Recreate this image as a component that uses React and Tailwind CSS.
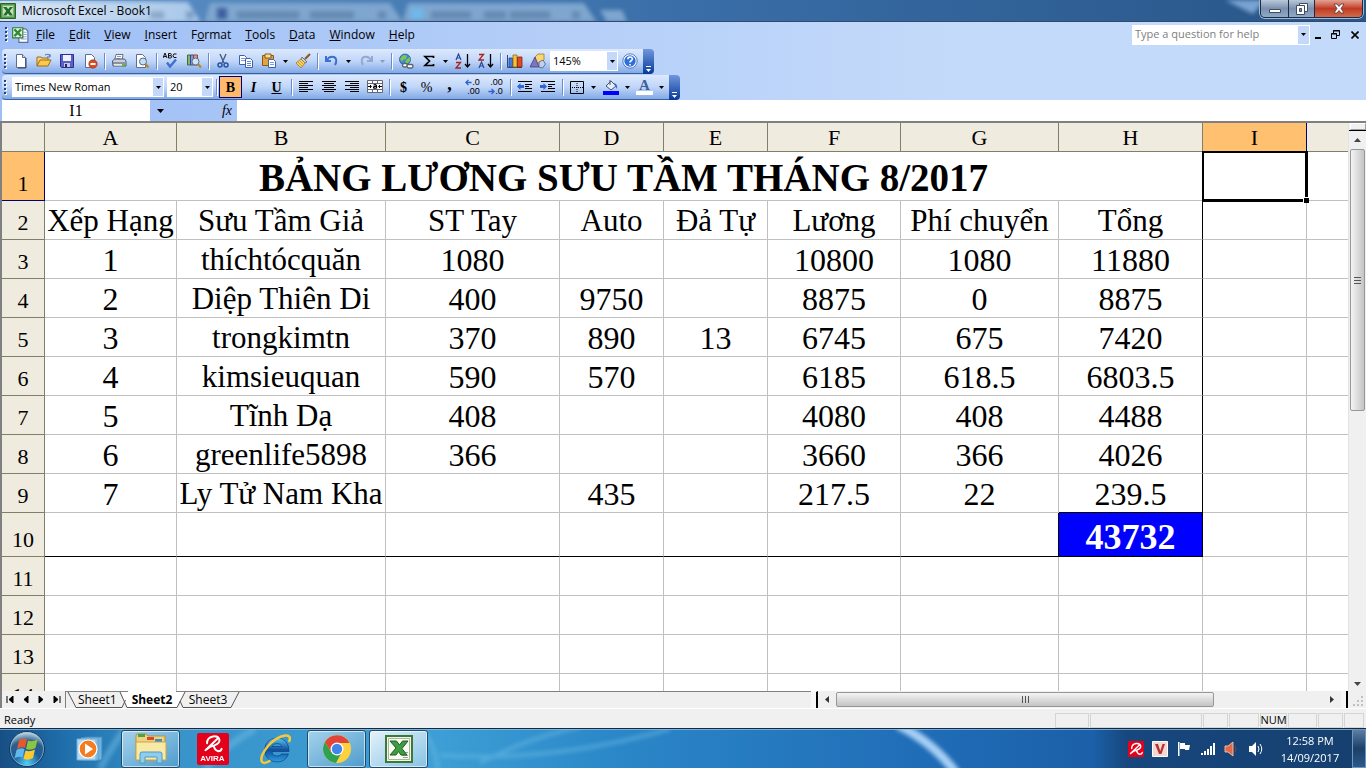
import clsx from 'clsx'

const UI = "font-['Open_Sans','Noto_Sans',sans-serif]"
const SERIF = "font-['Liberation_Serif',serif]"

const MENUS = ['File', 'Edit', 'View', 'Insert', 'Format', 'Tools', 'Data', 'Window', 'Help']
const ACCESS_KEY = { Format: 1 }

const COLUMNS = [
  { name: 'A', width: 'w-[132px]' },
  { name: 'B', width: 'w-[209px]' },
  { name: 'C', width: 'w-[174px]' },
  { name: 'D', width: 'w-[104px]' },
  { name: 'E', width: 'w-[104px]' },
  { name: 'F', width: 'w-[133px]' },
  { name: 'G', width: 'w-[158px]' },
  { name: 'H', width: 'w-[144px]' },
  { name: 'I', width: 'w-[104px]' },
  { name: '', width: '' },
]

const ROWS = [
  ['Xếp Hạng', 'Sưu Tầm Giả', 'ST Tay', 'Auto', 'Đả Tự', 'Lương', 'Phí chuyển', 'Tổng'],
  ['1', 'thíchtócquăn', '1080', '', '', '10800', '1080', '11880'],
  ['2', 'Diệp Thiên Di', '400', '9750', '', '8875', '0', '8875'],
  ['3', 'trongkimtn', '370', '890', '13', '6745', '675', '7420'],
  ['4', 'kimsieuquan', '590', '570', '', '6185', '618.5', '6803.5'],
  ['5', 'Tĩnh Dạ', '408', '', '', '4080', '408', '4488'],
  ['6', 'greenlife5898', '366', '', '', '3660', '366', '4026'],
  ['7', 'Ly Tử Nam Kha', '', '435', '', '217.5', '22', '239.5'],
  ['', '', '', '', '', '', '', '43732'],
  [], [], [], [],
]

function Svg({ size = 16, children, className }) {
  return (
    <svg width={size} height={size} viewBox="0 0 16 16" className={clsx('shrink-0', className)} aria-hidden="true">
      {children}
    </svg>
  )
}

function Caret({ className }) {
  return (
    <svg width="5" height="3" viewBox="0 0 5 3" className={clsx('shrink-0', className)} aria-hidden="true">
      <path d="M0 0h5L2.5 3z" fill="currentColor" />
    </svg>
  )
}

/* ---------- toolbar icons ---------- */

const page = <path d="M3.5 1.5h6l3 3v10h-9z" fill="#fff" stroke="#5b6f96" />

const lines = (rows) => rows.map(([x, y, w]) => <path key={y} d={`M${x} ${y}.5h${w}`} stroke="#000" />)

const ICONS = {
  new: <>{page}<path d="M9.5 1.5v3h3" fill="#cfdcf5" stroke="#5b6f96" /><path d="M13 5v10H5" fill="none" stroke="#33456c" /></>,
  open: (
    <>
      <path d="M1 13V4h4l1 1h6v2" fill="#f5d27a" stroke="#a06c14" />
      <path d="M1 13l3-6h11l-3 6z" fill="#fbc94e" stroke="#a06c14" />
      <path d="M9 2c2-1 4-1 5 1m0-2v3h-3" fill="none" stroke="#4a6fa0" />
    </>
  ),
  save: (
    <>
      <path d="M1.5 1.5h13v13h-12l-1-1z" fill="#5a5fc4" stroke="#2c2f8f" />
      <path d="M4 2h8v6H4z" fill="#eef1fb" />
      <path d="M5 10h6v4H5z" fill="#c3c6e6" />
      <path d="M6 11h2v3H6z" fill="#23266f" />
    </>
  ),
  permission: (
    <>
      {page}
      <circle cx="11" cy="11" r="4.2" fill="#e0491f" stroke="#a02b0c" strokeWidth=".6" />
      <path d="M8.5 10h5v2h-5z" fill="#fff" />
    </>
  ),
  print: (
    <>
      <path d="M5 1.5h7l-1 6H3.5z" fill="#fff" stroke="#65708c" />
      <path d="M6 3.5h4M5.5 5.5h4" stroke="#8d99b5" />
      <path d="M1.5 8l2-2h10l1.5 2v5h-13z" fill="#c9ced8" stroke="#4d586f" />
      <path d="M2 10h12" stroke="#4d586f" />
      <path d="M3 12h8" stroke="#fff" />
      <path d="M11 11h3v2h-3z" fill="#5cc02c" />
    </>
  ),
  preview: (
    <>
      <path d="M2.5 1.5h6l3 3v10h-9z" fill="#fff" stroke="#5b6f96" />
      <circle cx="9" cy="8.5" r="3.5" fill="#bfe0f5" stroke="#5f6b80" />
      <path d="M11.5 11l3 3.5" stroke="#b5852e" strokeWidth="2" />
    </>
  ),
  spelling: (
    <>
      <path d="M0 5l2-5 2 5M1 3.5h2M5.5 .5v4.5H7.5q1.200-.2 1.200-1.200T7.500 2.700H5.500M5.500 .5H7.300q1 0 1 1.100t-1 1.100M13.500 1q-3.500-1-3.500 1.700t3.500 1.800" fill="none" stroke="#111" />
      <path d="M4 9.5l3 4 6-7" fill="none" stroke="#3f6fd0" strokeWidth="2.4" />
    </>
  ),
  research: (
    <>
      <path d="M1.5 2h3v10h-3z" fill="#7db86c" stroke="#3c7332" />
      <path d="M4.5 2h3v10h-3z" fill="#8a96e0" stroke="#3b4596" />
      <path d="M7.5 2h4v10h-4z" fill="#d99a93" stroke="#8b4640" />
      <circle cx="9.5" cy="8.5" r="3.5" fill="#cfe6f6" stroke="#5f6b80" />
      <path d="M12 11l3 3.5" stroke="#b5852e" strokeWidth="2" />
    </>
  ),
  cut: (
    <>
      <path d="M5 1l4 9M11 1L7 10" stroke="#4b5d85" strokeWidth="1.4" />
      <circle cx="5" cy="12" r="2" fill="none" stroke="#2752a8" strokeWidth="1.5" />
      <circle cx="11" cy="12" r="2" fill="none" stroke="#2752a8" strokeWidth="1.5" />
    </>
  ),
  copy: (
    <>
      <path d="M1.5 2.5h5l2 2v7h-7z" fill="#fff" stroke="#3c62ad" />
      <path d="M3 5.5h4M3 7.5h4" stroke="#7b9bdb" />
      <path d="M7.5 5.5h5l2 2v7h-7z" fill="#fff" stroke="#3c62ad" />
      <path d="M9 8.5h4M9 10.5h4M9 12.5h4" stroke="#5f87d6" />
    </>
  ),
  paste: (
    <>
      <path d="M1.5 2.5h11v10h-11z" fill="#e0a53c" stroke="#8b5a12" />
      <path d="M4 1h6v4H4z" fill="#f4df9a" stroke="#8b5a12" />
      <path d="M7.5 6.5h5l2 2v6h-7z" fill="#fff" stroke="#3c62ad" />
      <path d="M9 9.5h4M9 11.5h4" stroke="#7b9bdb" />
    </>
  ),
  painter: (
    <>
      <path d="M15 1l-5 5" stroke="#8a5a1c" strokeWidth="2.2" />
      <path d="M7 4l5 5-2 1-4-4z" fill="#c9ced8" stroke="#555f78" strokeWidth=".8" />
      <path d="M6 6l4 4-4 5-5-5z" fill="#f6d264" stroke="#a7771d" strokeWidth=".8" />
      <path d="M3 9l4 4M4.5 7.5l4 4" stroke="#c28f29" strokeWidth=".8" />
    </>
  ),
  undo: <path d="M2 3v5h5M2.5 7.5q3-5 7.5-3.5 4 2 1 8" fill="none" stroke="#3b6fd0" strokeWidth="2" />,
  redo: <path d="M14 3v5H9M13.5 7.5Q10.5 2.5 6 4q-4 2-1 8" fill="none" stroke="#93a9cf" strokeWidth="2" />,
  link: (
    <>
      <circle cx="7" cy="6.5" r="5.5" fill="#3d86d8" stroke="#2a5a9a" strokeWidth=".8" />
      <path d="M4 3q3-2 5 0l-1 3-3 1-1 2-2-3zM9 6l3-2v4l-3 3-2-2z" fill="#7cc84e" />
      <rect x="4.5" y="10.5" width="5" height="3.5" rx="1.7" fill="#fff" stroke="#5b6474" strokeWidth="1.4" />
      <rect x="9" y="11.5" width="6" height="3.5" rx="1.7" fill="#fff" stroke="#5b6474" strokeWidth="1.4" />
    </>
  ),
  sum: <path d="M12.5 5V3.5H4L8.5 8 4 12.5h8.5V11" fill="none" stroke="#000" strokeWidth="1.7" />,
  sortAsc: (
    <>
      <path d="M1 7l2.5-6L6 7M2 5h3" fill="none" stroke="#28489c" strokeWidth="1.2" />
      <path d="M1 9.5h4.5L1 15h5" fill="none" stroke="#a8231c" strokeWidth="1.3" />
      <path d="M12.5 1v12M10 11l2.5 3 2.5-3" fill="none" stroke="#000" strokeWidth="1.3" />
    </>
  ),
  sortDesc: (
    <>
      <path d="M1 1.5h4.5L1 7h5" fill="none" stroke="#a8231c" strokeWidth="1.3" />
      <path d="M1 15l2.5-6L6 15M2 13h3" fill="none" stroke="#28489c" strokeWidth="1.2" />
      <path d="M12.5 1v12M10 11l2.5 3 2.5-3" fill="none" stroke="#000" strokeWidth="1.3" />
    </>
  ),
  chart: (
    <>
      <path d="M.5 2v12.5H15" fill="none" stroke="#39465f" />
      <path d="M2 5h3.5v9H2z" fill="#3f7be0" stroke="#1f468f" strokeWidth=".8" />
      <path d="M6 2h4v12H6z" fill="#f7c13a" stroke="#96690b" strokeWidth=".8" />
      <path d="M10.5 4H15v10h-4.5z" fill="#de4a22" stroke="#8a240a" strokeWidth=".8" />
    </>
  ),
  drawing: (
    <>
      <path d="M5 4l3-3h6v6l-3 3H5z" fill="#f5d775" stroke="#a07a22" strokeWidth=".8" />
      <path d="M0 14L5 4l4 10z" fill="#7f74bd" stroke="#453b86" strokeWidth=".8" />
      <path d="M9 9l4-2 2.5 4-3 4-3.5-1z" fill="#c5cfe8" stroke="#4a5c8c" strokeWidth=".8" />
    </>
  ),
  help: (
    <>
      <circle cx="8" cy="8" r="6.3" fill="#2f6fdc" stroke="#fff" strokeWidth="1.2" />
      <circle cx="8" cy="8" r="7.2" fill="none" stroke="#3968b8" strokeWidth=".8" />
      <path d="M5.8 6.3q0-2.3 2.3-2.3t2.2 2q0 1-1.2 1.700T8 9.500M8 11v1.500" fill="none" stroke="#fff" strokeWidth="1.6" />
    </>
  ),
  left: lines([[1, 2, 14], [1, 4, 9], [1, 6, 14], [1, 8, 9], [1, 10, 14], [1, 12, 9]]),
  center: lines([[1, 2, 14], [3, 4, 10], [1, 6, 14], [3, 8, 10], [1, 10, 14], [3, 12, 10]]),
  right: lines([[1, 2, 14], [6, 4, 9], [1, 6, 14], [6, 8, 9], [1, 10, 14], [6, 12, 9]]),
  merge: (
    <>
      <path d="M.5 1.5h15v12H.5z" fill="#fff" stroke="#667" />
      <path d="M.5 4.5h15M.5 10.5h15M5.5 1.5v3M10.5 1.5v3M5.5 10.5v3M10.5 10.5v3" stroke="#667" />
      <path d="M1 7.5h3M12 7.5h3M3 6l1.5 1.5L3 9M13 6l-1.5 1.5L13 9" stroke="#000" fill="none" />
      <path d="M6.5 6q3-1 3 1v2.5M9.5 7.5q-3-.2-3 1t3 .5" stroke="#000" fill="none" strokeWidth="1.2" />
    </>
  ),
  arrowLeft: <path d="M15 8H3M8 2L2 8l6 6" fill="none" stroke="#2c5fd2" strokeWidth="3" />,
  arrowRight: <path d="M1 8h12M8 2l6 6-6 6" fill="none" stroke="#2c5fd2" strokeWidth="3" />,
  outdent: (
    <>
      {lines([[1, 2, 14], [8, 5, 7], [8, 7, 4], [8, 9, 7], [1, 12, 14]])}
      <path d="M0 7.5L3.500 4v2H7v3H3.500v2z" fill="#3165d6" />
    </>
  ),
  indent: (
    <>
      {lines([[1, 2, 14], [8, 5, 7], [8, 7, 4], [8, 9, 7], [1, 12, 14]])}
      <path d="M7 7.5L3.500 4v2H0v3h3.500v2z" fill="#3165d6" />
    </>
  ),
  borders: (
    <>
      <path d="M1.5 2.5h13v12h-13z" fill="none" stroke="#000" />
      <path d="M8 4v10M3 8.5h11" stroke="#000" strokeDasharray="1 1" />
    </>
  ),
  fill: (
    <>
      <path d="M3 7l5-5 5 5-5 4z" fill="#e6ecf8" stroke="#45526f" />
      <path d="M7 1v5" stroke="#45526f" />
      <path d="M11 4q4 1 3 6l-2-3z" fill="#3b6fd0" />
      <path d="M0 12h16v4H0z" fill="#0000ff" />
    </>
  ),
}

function IconButton({ icon, label, children, active }) {
  return (
    <button
      type="button"
      aria-label={label}
      className={clsx(
        'flex h-[22px] w-[23px] shrink-0 items-center justify-center text-black',
        active && 'border border-[#000080] bg-[#ffbb6b]'
      )}
    >
      {children || <Svg>{ICONS[icon]}</Svg>}
    </button>
  )
}

function ArrowButton({ label, dim }) {
  return (
    <button type="button" aria-label={label} className={clsx('flex h-[22px] w-[11px] shrink-0 items-center justify-center', dim && 'text-[#8c9cba]')}>
      <Caret />
    </button>
  )
}

function Divider() {
  return <span className="ml-[3px] mr-[2px] h-4 w-px shrink-0 bg-[#6a8ccb] shadow-[1px_1px_0_#fff]" />
}

function Grip() {
  return (
    <svg width="3" height="15" viewBox="0 0 3 15" className="mx-[2px] shrink-0" aria-hidden="true">
      {[0, 4, 8, 12].map((y) => (
        <g key={y}>
          <rect x="1" y={y + 1} width="2" height="2" fill="#fff" />
          <rect x="0" y={y} width="2" height="2" fill="#27417a" />
        </g>
      ))}
    </svg>
  )
}

function Toolbar({ children, label }) {
  return (
    <div className="ml-[2px] flex h-[25px] w-max">
      <div role="toolbar" aria-label={label} className="flex items-center rounded-l-sm border-b border-[#3b619c] bg-linear-to-b from-[#dde9fd] via-[#c0d6f8] to-[#82a9e6] pr-[2px]">
        <Grip />
        {children}
      </div>
      <button type="button" aria-label={`${label} options`} className="flex w-[11px] flex-col items-center justify-end rounded-r-sm bg-linear-to-b from-[#6f97dc] to-[#06389a] pb-[2px] text-white">
        <span className="mb-[2px] h-px w-[5px] bg-white" />
        <Caret />
      </button>
    </div>
  )
}

function Combo({ label, value, options = [], className }) {
  return (
    <div className={clsx('flex h-5 shrink-0 items-stretch bg-white', className)}>
      <select aria-label={label} defaultValue={value} className={`min-w-0 flex-1 appearance-none bg-white px-[3px] text-[11px] leading-5 ${UI}`}>
        {[value, ...options].map((o) => <option key={o}>{o}</option>)}
      </select>
      <span className="pointer-events-none my-px mr-px flex w-[10px] items-center justify-center bg-[#c4d9f9]">
        <Caret />
      </span>
    </div>
  )
}

function ExcelIcon({ className }) {
  return (
    <Svg className={className}>
      <path d="M.5.5h15v15H.5z" fill="#4d9a49" stroke="#2a6129" />
      <path d="M2.5 2.5h11v11h-11z" fill="#c9dfc0" stroke="#7db373" />
      <path d="M3 4h3.500l1.700 2.300L10 4h3L9.700 8l3.300 4.500H9.500L8 10.200l-1.700 2.300H3L6.300 8z" fill="#1f6c28" />
    </Svg>
  )
}

/* ---------- window chrome ---------- */

function TitleBar() {
  return (
    <header className="relative flex h-[22px] shrink-0 items-center overflow-hidden border-b border-[#35486b] bg-linear-to-r from-[#5f93c8] via-[#3a6ea8] to-[#275587]">
      <svg className="absolute inset-0 blur-[2px]" width="100%" height="22" aria-hidden="true">
        <path d="M-10 2H188l14 22H-10z" fill="#a9c8ea" />
        <path d="M210 3h180l14 21H204z" fill="#7ea6cf" />
        <path d="M408 3h176l14 21H402z" fill="#7ea6cf" />
        <path d="M600 10h22l6 14h-20z" fill="#7ea6cf" />
        <path d="M217 8h10v11h-10z" fill="#3e5f9f" />
        <path d="M411 8h12v11h-12z" fill="#6eb8ea" />
        <path d="M237 15h62M310 15h44M431 15h40M484 15h22M510 15h40M150 15h14M186 15h8M378 15h8M572 15h8" stroke="#47678e" strokeWidth="7" opacity=".45" />
        <path d="M1225 0h40l-12 14z" fill="#7aa4d2" />
      </svg>
      <div className="relative flex min-w-0 items-center bg-linear-to-r from-white/60 to-transparent pr-10">
        <ExcelIcon />
        <h1 className={`ml-[6px] text-[12px] leading-[20px] text-black ${UI}`}>Microsoft Excel - Book1</h1>
      </div>
      <div className="relative ml-auto mr-[3px] flex h-[18px] self-start overflow-hidden rounded-b-[5px] border border-t-0 border-[#1c2c48] shadow-[0_0_0_1px_#9fb8d6]">
        <button type="button" aria-label="Minimize" className="flex w-7 items-center justify-center border-r border-[#1c2c48] bg-linear-to-b from-[#b9c8da] via-[#7b91ae] to-[#8fa9c8]">
          <svg width="12" height="12" viewBox="0 0 12 12"><path d="M.5 6.5h11v3H.5z" fill="#fff" stroke="#3f4c63" /></svg>
        </button>
        <button type="button" aria-label="Restore" className="flex w-[26px] items-center justify-center border-r border-[#1c2c48] bg-linear-to-b from-[#b9c8da] via-[#7b91ae] to-[#8fa9c8]">
          <svg width="12" height="12" viewBox="0 0 12 12">
            <path d="M3.5.5h8v8h-8z" fill="#fff" stroke="#3f4c63" />
            <path d="M.5 2.5h8v9h-8z" fill="#fff" stroke="#3f4c63" />
            <path d="M3.5 5.5h2v3h-2z" fill="#7b91ae" stroke="#3f4c63" />
          </svg>
        </button>
        <button type="button" aria-label="Close" className="flex w-[47px] items-center justify-center bg-linear-to-b from-[#e2a193] via-[#c03a22] to-[#d06a4c]">
          <svg width="12" height="11" viewBox="0 0 12 11">
            <path d="M1 1h3l2 2.500L8 1h3L8 5.500 11 10H8L6 7.500 4 10H1l3-4.500z" fill="#fff" stroke="#53353a" strokeWidth=".8" />
          </svg>
        </button>
      </div>
    </header>
  )
}

function MenuBar() {
  return (
    <nav className={`flex h-[27px] items-center pb-[2px] pr-[5px] text-[12px] ${UI}`}>
      <span className="ml-[3px] flex items-center gap-px">
        <Grip />
        <Svg size={18}>
          <path d="M7 2.5h6l2 2v10H7z" fill="#fff" stroke="#5b6f96" />
          <path d="M11 5.5h3M11 7.5h3M9 9.5h5M9 11.5h5" stroke="#7ea4dc" />
          <path d="M1.5 1.5h9v9h-9z" fill="#e9f3e6" stroke="#2f7a33" />
          <path d="M3 3l6 6M9 3L3 9" stroke="#2f8a35" strokeWidth="2" />
        </Svg>
      </span>
      <ul className="flex">
        {MENUS.map((m) => {
          const k = ACCESS_KEY[m] || 0
          return (
            <li key={m}>
              <button type="button" className="px-[7px] leading-5">
                {m.slice(0, k)}<u>{m[k]}</u>{m.slice(k + 1)}
              </button>
            </li>
          )
        })}
      </ul>
      <div className="ml-auto flex h-5 w-[178px] items-stretch bg-white">
        <input aria-label="Type a question for help" placeholder="Type a question for help" className="min-w-0 flex-1 px-[3px] text-[11px] placeholder:text-[#808080]" />
        <button type="button" aria-label="Show questions" className="m-px flex w-[11px] items-center justify-center bg-[#c4d9f9]">
          <Caret />
        </button>
      </div>
      <div className="flex items-center">
        <button type="button" aria-label="Minimize workbook" className="ml-[3px] p-[2px]">
          <svg width="8" height="9" viewBox="0 0 8 9"><path d="M0 7h6v2H0z" /></svg>
        </button>
        <button type="button" aria-label="Restore workbook" className="ml-1 p-[2px]">
          <svg width="9" height="9" viewBox="0 0 9 9"><path d="M2.5 4V.5h6v5H6M2 1h7M.5 3.5h5v5h-5zM0 4h6" fill="none" stroke="#000" /></svg>
        </button>
        <button type="button" aria-label="Close workbook" className="ml-[7px] p-[2px]">
          <svg width="8" height="8" viewBox="0 0 8 8"><path d="M.5.5l7 7M7.5.5l-7 7" stroke="#000" strokeWidth="1.6" /></svg>
        </button>
      </div>
    </nav>
  )
}

function StandardToolbar() {
  return (
    <Toolbar label="Standard">
      <IconButton icon="new" label="New" />
      <IconButton icon="open" label="Open" />
      <IconButton icon="save" label="Save" />
      <IconButton icon="permission" label="Permission" />
      <Divider />
      <IconButton icon="print" label="Print" />
      <IconButton icon="preview" label="Print Preview" />
      <Divider />
      <IconButton icon="spelling" label="Spelling" />
      <IconButton icon="research" label="Research" />
      <Divider />
      <IconButton icon="cut" label="Cut" />
      <IconButton icon="copy" label="Copy" />
      <IconButton icon="paste" label="Paste" />
      <ArrowButton label="Paste options" />
      <IconButton icon="painter" label="Format Painter" />
      <Divider />
      <IconButton icon="undo" label="Undo" />
      <ArrowButton label="Undo list" />
      <IconButton icon="redo" label="Redo" />
      <ArrowButton label="Redo list" dim />
      <Divider />
      <IconButton icon="link" label="Insert Hyperlink" />
      <IconButton icon="sum" label="AutoSum" />
      <ArrowButton label="AutoSum functions" />
      <IconButton icon="sortAsc" label="Sort Ascending" />
      <IconButton icon="sortDesc" label="Sort Descending" />
      <Divider />
      <IconButton icon="chart" label="Chart Wizard" />
      <IconButton icon="drawing" label="Drawing" />
      <Combo label="Zoom" value="145%" options={['200%', '100%', '75%']} className="ml-px w-[68px]" />
      <IconButton icon="help" label="Help" />
    </Toolbar>
  )
}

const DECIMAL = "flex flex-col items-end font-['Liberation_Sans',sans-serif] text-[9px] leading-[9px]"

function FormattingToolbar() {
  return (
    <Toolbar label="Formatting">
      <Combo label="Font" value="Times New Roman" options={['Arial', 'Tahoma']} className="ml-[3px] w-[152px]" />
      <Combo label="Font Size" value="20" options={['10', '12', '14']} className="ml-[3px] w-[46px]" />
      <Divider />
      <IconButton label="Bold" active><b className={`text-[14px] ${SERIF}`}>B</b></IconButton>
      <IconButton label="Italic"><i className={`text-[14px] font-bold ${SERIF}`}>I</i></IconButton>
      <IconButton label="Underline"><u className={`text-[14px] font-bold ${SERIF}`}>U</u></IconButton>
      <Divider />
      <IconButton icon="left" label="Align Left" />
      <IconButton icon="center" label="Center" />
      <IconButton icon="right" label="Align Right" />
      <IconButton icon="merge" label="Merge and Center" />
      <Divider />
      <IconButton label="Currency Style"><b className={`text-[14px] ${SERIF}`}>$</b></IconButton>
      <IconButton label="Percent Style"><span className={`text-[14px] ${SERIF}`}>%</span></IconButton>
      <IconButton label="Comma Style"><b className={`pb-[6px] text-[18px] leading-4 ${SERIF}`}>,</b></IconButton>
      <IconButton label="Increase Decimal">
        <span className={DECIMAL}>
          <span className="flex items-center"><Svg size={7}>{ICONS.arrowLeft}</Svg>.0</span>
          <span>.00</span>
        </span>
      </IconButton>
      <IconButton label="Decrease Decimal">
        <span className={DECIMAL}>
          <span>.00</span>
          <span className="flex items-center"><Svg size={7}>{ICONS.arrowRight}</Svg>.0</span>
        </span>
      </IconButton>
      <Divider />
      <IconButton icon="outdent" label="Decrease Indent" />
      <IconButton icon="indent" label="Increase Indent" />
      <Divider />
      <IconButton icon="borders" label="Borders" />
      <ArrowButton label="Border styles" />
      <IconButton icon="fill" label="Fill Color" />
      <ArrowButton label="Fill colors" />
      <IconButton label="Font Color">
        <span className={`border-b-4 border-white px-[3px] text-[15px] font-bold leading-[12px] text-[#3f5f9f] ${SERIF}`}>A</span>
      </IconButton>
      <ArrowButton label="Font colors" />
    </Toolbar>
  )
}

function FormulaBar() {
  return (
    <div className="flex h-[21px] pl-[2px]">
      <input aria-label="Name Box" defaultValue="I1" className={`w-[148px] bg-white text-center text-[16px] leading-5 ${SERIF}`} />
      <button type="button" aria-label="Names" className="flex w-5 items-center justify-center">
        <svg width="7" height="4" viewBox="0 0 7 4"><path d="M0 0h7L3.500 4z" /></svg>
      </button>
      <button type="button" aria-label="Insert Function" className={`ml-auto w-5 text-[14px] italic ${SERIF}`}>fx</button>
      <input aria-label="Formula" className="w-[calc(100%-235px)] bg-white" />
    </div>
  )
}

/* ---------- sheet ---------- */

const HEAD = 'border-b border-r p-0 font-normal text-[22px] text-black'

function RowHead({ n, active }) {
  return (
    <th scope="row" className={clsx(HEAD, 'align-bottom leading-8', active ? 'border-[#000080] bg-[#ffc070]' : 'border-[#808069] bg-[#efebde]')}>
      {n}
    </th>
  )
}

function Cell({ col, row, value }) {
  const total = row === 10 && col === 7
  const label = row === 2 || col === 1
  return (
    <td
      className={clsx(
        'whitespace-nowrap border-b p-0 text-center align-bottom',
        total ? 'bg-[#0000ff] text-[36px] font-bold leading-[38px] text-white' : 'leading-9',
        !total && (label ? 'text-[31px]' : 'text-[32px]'),
        col < 9 && 'border-r',
        (row === 10 && col < 8) || (row === 9 && col === 7) ? 'border-b-black' : 'border-b-[#c0c0c0]',
        (col === 7 && row <= 10) || (col === 6 && row === 10) ? 'border-r-black' : 'border-r-[#c0c0c0]'
      )}
    >
      {value}
    </td>
  )
}

function Sheet() {
  return (
    <table className={`w-full table-fixed border-separate border-spacing-0 bg-white ${SERIF}`}>
      <colgroup>
        <col className="w-[43px]" />
        {COLUMNS.map((c) => <col key={c.name} className={c.width} />)}
      </colgroup>
      <thead>
        <tr className="h-[29px]">
          <td className={clsx(HEAD, 'border-[#808069] bg-[#efebde]')} />
          {COLUMNS.map((c, i) => (
            <th
              key={c.name}
              scope="col"
              className={clsx(
                HEAD, 'pt-[2px] leading-[26px]',
                c.name === 'I' ? 'border-[#000080] bg-[#ffc070]' : 'border-[#808069] bg-[#efebde]',
                i === 9 && 'border-r-0'
              )}
            >
              {c.name}
            </th>
          ))}
        </tr>
      </thead>
      <tbody>
        <tr className="h-[49px]">
          <RowHead n={1} active />
          <td colSpan={8} className="border-b border-r border-b-[#c0c0c0] border-r-black p-0 text-center align-bottom text-[39px] font-bold leading-[44px]">
            BẢNG LƯƠNG SƯU TẦM THÁNG 8/2017
          </td>
          <td className="relative border-b border-r border-[#c0c0c0] p-0">
            <span className="absolute -bottom-[2px] -left-px -right-[2px] -top-px border-[3px] border-l-2 border-t-2 border-black" />
            <span className="absolute -bottom-[3px] -right-[3px] size-[6px] border-l border-t border-white bg-black" />
          </td>
          <td className="border-b border-[#c0c0c0] p-0" />
        </tr>
        {ROWS.map((cells, r) => (
          <tr key={r} className={r === 8 ? 'h-[44px]' : 'h-[39px]'}>
            <RowHead n={r + 2} />
            {COLUMNS.map((c, i) => <Cell key={c.name} col={i} row={r + 2} value={cells[i]} />)}
          </tr>
        ))}
      </tbody>
    </table>
  )
}

function VerticalScroll() {
  return (
    <div className="flex w-[18px] shrink-0 flex-col items-center border-l border-[#e3e3e3] bg-[#f0f0f0]">
      <span className="h-[7px] w-4 border border-[#a0a0a0] border-l-white border-t-white" />
      <span className="h-px w-full bg-black" />
      <button type="button" aria-label="Scroll up" className="flex h-[18px] w-full items-center justify-center">
        <svg width="7" height="4" viewBox="0 0 7 4"><path d="M0 4L3.500 0 7 4z" fill="#444" /></svg>
      </button>
      <div className="flex h-[262px] w-[15px] flex-col items-center justify-center gap-[2px] rounded-[2px] border border-[#979797] bg-linear-to-r from-[#f4f4f4] via-[#dcdcdc] to-[#c4c4c4]">
        <span className="h-px w-[7px] bg-[#555]" />
        <span className="h-px w-[7px] bg-[#555]" />
        <span className="h-px w-[7px] bg-[#555]" />
      </div>
      <button type="button" aria-label="Scroll down" className="mt-auto flex h-[14px] w-full items-center justify-center">
        <svg width="7" height="4" viewBox="0 0 7 4"><path d="M0 0h7L3.500 4z" fill="#444" /></svg>
      </button>
    </div>
  )
}

function TabEdge({ d, fill }) {
  return (
    <svg width="12" height="16" viewBox="0 0 12 16" className="shrink-0" aria-hidden="true">
      {fill && <path d={fill} fill="#fff" />}
      <path d={d} fill="none" stroke="#555" />
    </svg>
  )
}

const NAV = [
  ['First sheet', 'M1 0v7M7 0v7L3 3.500z'],
  ['Previous sheet', 'M6 0v7L2 3.500z'],
  ['Next sheet', 'M2 0v7l4-3.500z'],
  ['Last sheet', 'M1 0v7l4-3.500zM7 0v7'],
]

function SheetTabs() {
  return (
    <div className="flex h-[17px] shrink-0 bg-[#f0f0f0]">
      <div className="flex w-16 border-r border-[#808080]">
        {NAV.map(([label, d]) => (
          <button key={label} type="button" aria-label={label} className="flex w-4 items-center justify-center">
            <svg width="8" height="7" viewBox="0 0 8 7"><path d={d} stroke="#000" strokeWidth="1" /></svg>
          </button>
        ))}
      </div>
      <div role="tablist" className={`flex flex-1 border-t border-[#808080] text-[12px] leading-[15px] ${UI}`}>
        <TabEdge d="M2 0l8 15.500h2" />
        <button type="button" role="tab" aria-selected="false" className="w-[38px] border-b border-[#555] text-center">Sheet1</button>
        <TabEdge d="M0 15.500h6L9.500 8M4 0l7 15.500h1" fill="M4 -1h8v17h-1L4 0z" />
        <button type="button" role="tab" aria-selected="true" className="-mt-px w-[48px] border-b border-[#555] bg-white pt-px text-center font-bold leading-[15px]">Sheet2</button>
        <TabEdge d="M0 15.500h1L9 0M4 9l3 6.500h5" fill="M0 -1h9L1 16H0z" />
        <button type="button" role="tab" aria-selected="false" className="w-10 border-b border-[#555] text-center">Sheet3</button>
        <TabEdge d="M0 15.500h3L11 0" />
      </div>
      <span className="w-[7px] border-r-2 border-black border-t border-t-white bg-[#f7f7f7]" />
      <div className="flex w-[530px] items-center">
        <button type="button" aria-label="Scroll left" className="flex w-[18px] justify-center">
          <svg width="4" height="7" viewBox="0 0 4 7"><path d="M4 0v7L0 3.500z" fill="#333" /></svg>
        </button>
        <div className="flex h-[15px] w-[378px] items-center justify-center gap-[2px] rounded-[2px] border border-[#979797] bg-linear-to-b from-[#f4f4f4] via-[#dcdcdc] to-[#c4c4c4]">
          <span className="h-[7px] w-px bg-[#555]" />
          <span className="h-[7px] w-px bg-[#555]" />
          <span className="h-[7px] w-px bg-[#555]" />
        </div>
        <button type="button" aria-label="Scroll right" className="ml-auto flex w-[18px] justify-center">
          <svg width="4" height="7" viewBox="0 0 4 7"><path d="M0 0v7l4-3.500z" fill="#333" /></svg>
        </button>
        <span className="h-full w-[7px] border-r-2 border-black bg-[#f7f7f7]" />
      </div>
      <svg width="18" height="17" viewBox="0 0 18 17" aria-hidden="true">
        <path d="M13 5h2v2h-2zM13 9h2v2h-2zM9 9h2v2H9zM13 13h2v2h-2zM9 13h2v2H9zM5 13h2v2H5z" fill="#c0c0c0" />
      </svg>
    </div>
  )
}

function StatusBar() {
  const box = 'h-[15px] border border-[#d5d5d5]'
  return (
    <footer className={`flex h-5 shrink-0 items-center border-t border-white bg-[#f0f0f0] pl-1 pr-[2px] pt-[3px] text-[11px] leading-[14px] ${UI}`}>
      <span>Ready</span>
      <div className="ml-auto flex gap-px">
        <span className={`${box} w-[34px]`} />
        <span className={`${box} w-[112px]`} />
        <span className={`${box} w-[25px]`} />
        <span className={`${box} w-[30px]`} />
        <span className={`${box} flex w-[27px] items-center justify-center`}>NUM</span>
        <span className={`${box} w-[29px]`} />
        <span className={`${box} w-[25px]`} />
        <span className={`${box} w-5`} />
      </div>
    </footer>
  )
}

/* ---------- taskbar ---------- */

function Umbrella() {
  return (
    <path
      d="M2.5 12.500Q6 9.500 9 9q4-1.500 3.700-4Q12 2 8 2.500 3.500 3.500 3.700 7.500M12 3.500L2.500 12.500M8.500 9.500q1 3.500 3.500 3.800 1.800 0 2.300-1.800"
      fill="none" stroke="#fff" strokeLinecap="round" strokeLinejoin="round" strokeWidth="1.4"
    />
  )
}

function TaskButton({ label, open, bright, children, className }) {
  return (
    <button
      type="button"
      aria-label={label}
      className={clsx(
        'flex h-[38px] w-[59px] items-center justify-center',
        open && 'rounded-[3px] border border-[#1e4a6e] shadow-[inset_0_0_0_1px_rgba(255,255,255,0.6)]',
        open && (bright ? 'bg-linear-to-br from-[#e4f2fa] to-[#86c2e4]' : 'bg-linear-to-br from-[#a5d3ec] to-[#4c9ccd]'),
        className
      )}
    >
      {children}
    </button>
  )
}

function Taskbar() {
  return (
    <div className="relative flex h-10 shrink-0 items-center overflow-hidden border-t border-[#16293f] bg-linear-to-r from-[#1a5a92] via-[#2a80c4] to-[#15406f]">
      <svg className="absolute inset-0" width="100%" height="40" viewBox="0 0 1366 40" preserveAspectRatio="none" aria-hidden="true">
        <defs>
          <linearGradient id="sky" x1="0" x2="1" y1="0" y2="0">
            <stop offset="0" stopColor="#174f84" />
            <stop offset=".05" stopColor="#2070ad" />
            <stop offset=".12" stopColor="#3893c9" />
            <stop offset=".32" stopColor="#3d9fd5" />
            <stop offset=".45" stopColor="#2b87c8" />
            <stop offset=".7" stopColor="#1f6ab5" />
            <stop offset=".8" stopColor="#1b60a8" />
            <stop offset=".825" stopColor="#17477e" />
            <stop offset="1" stopColor="#153f6e" />
          </linearGradient>
          <filter id="soft" x="-20%" width="140%"><feGaussianBlur stdDeviation="2" /></filter>
        </defs>
        <path d="M0 0h1366v40H0z" fill="url(#sky)" />
        <g fill="none" filter="url(#soft)">
          <path d="M898-4q36 18 58 48" stroke="#a6cff5" strokeWidth="9" />
          <path d="M480 34Q530 8 580-2M440 26q110 8 230-26M422 0q12 14 16 40" stroke="#6dbce6" strokeWidth="4" opacity=".5" />
          <path d="M100 40q10-20 25-40M205 40q20-24 50-40" stroke="#70bce6" strokeWidth="7" opacity=".5" />
        </g>
        <path d="M0 .5h1366" stroke="#8bbce0" opacity=".8" />
      </svg>
      <div className="relative flex flex-1 items-center pl-2">
        <button type="button" aria-label="Start" className="size-[38px]">
          <svg width="38" height="38" viewBox="0 0 38 38">
            <defs>
              <radialGradient id="orb" cx=".5" cy=".9" r=".85">
                <stop offset="0" stopColor="#4fd0f4" />
                <stop offset=".45" stopColor="#1c5c98" />
                <stop offset=".75" stopColor="#2d5f8c" />
                <stop offset="1" stopColor="#b3cddc" />
              </radialGradient>
            </defs>
            <circle cx="19" cy="19" r="17.5" fill="url(#orb)" stroke="#12375c" />
            <circle cx="19" cy="19" r="16.5" fill="none" stroke="#a8cfe6" opacity=".6" />
            <path d="M11 10.500q4-3 8-1l-2 8.500q-4-2-8 1z" fill="#e9572b" />
            <path d="M20 10.500q4 2 9.500-1l-2 8.500q-5 3-9.500 1z" fill="#8cc63f" />
            <path d="M8.500 20q4-3 8-1l-2 8.500q-4-2-8 1z" fill="#5fb9ee" />
            <path d="M17.500 20.500q4 2 9.500-1l-2 8.500q-5 3-9.500 1z" fill="#fcc82c" />
          </svg>
        </button>
        <TaskButton label="Windows Media Player" className="ml-[14px]">
          <svg width="28" height="26" viewBox="0 0 28 26">
            <path d="M9 1h17v23H9z" fill="#6fb2dc" stroke="#4189bd" />
            <path d="M5 2h17v22H5z" fill="#93c9e8" stroke="#5b9fce" />
            <path d="M1 3h19v21H1z" fill="#b3daf0" stroke="#6caed7" />
            <circle cx="12" cy="13" r="9" fill="#f47c1e" stroke="#fff" strokeWidth="1.2" />
            <path d="M9 7.500v11l8-5.500z" fill="#fff" />
          </svg>
        </TaskButton>
        <TaskButton label="Windows Explorer" open className="ml-[2px]">
          <svg width="34" height="31" viewBox="0 0 34 31">
            <path d="M2 3q0-2 2-2h8l2 2h17v24H2z" fill="#efd27c" stroke="#b99338" />
            <path d="M4 1h7v3H4z" fill="#4ba24a" />
            <path d="M13 4h7v3h-7z" fill="#d24b34" />
            <path d="M21 6h7v3h-7z" fill="#3d8fd0" />
            <path d="M2 9h30v18H2z" fill="#f9e9a6" stroke="#c9a647" />
            <path d="M6 30V21q0-2 2-2h18q2 0 2 2v9h-5v-6H11v6z" fill="#8ecdec" stroke="#4c9cc8" />
          </svg>
        </TaskButton>
        <TaskButton label="Avira" className="ml-[3px]">
          <span className="flex size-8 flex-col items-center rounded-[2px] bg-[#e2001a]">
            <Svg size={22}><Umbrella /></Svg>
            <span className="font-['Liberation_Sans',sans-serif] text-[8px] font-bold leading-[8px] text-white">AVIRA</span>
          </span>
        </TaskButton>
        <TaskButton label="Internet Explorer" className="ml-[3px]">
          <svg width="34" height="32" viewBox="0 0 34 32">
            <defs>
              <linearGradient id="ie" x1="0" x2="0" y1="0" y2="1">
                <stop offset="0" stopColor="#5cc6f5" />
                <stop offset=".5" stopColor="#0f4f9e" />
                <stop offset="1" stopColor="#2b9fe2" />
              </linearGradient>
            </defs>
            <path d="M31 18.500H14q.5 4.500 5 4.500 3 0 4.500-2h7Q27.500 29 19 29 7.500 28.500 6.500 17 7.500 5.500 19 5q12 .5 12 13.500zm-7-5Q23.500 10.500 19 10.500t-5 3z" fill="url(#ie)" stroke="#0b3770" strokeWidth=".6" />
            <path d="M31 9q3-7-4-6.500Q18 4 10 13 2 23 3.500 28q2 4 9-.5" fill="none" stroke="#f6c936" strokeWidth="2.5" />
          </svg>
        </TaskButton>
        <TaskButton label="Google Chrome" open className="ml-[3px]">
          <svg width="30" height="30" viewBox="0 0 30 30">
            <circle cx="15" cy="15" r="14" fill="#fdd13e" />
            <path d="M2.900 8A14 14 0 0 1 27.500 9H15L9 18z" fill="#e0443a" />
            <path d="M2.900 8A14 14 0 0 0 14 29l6.200-11.500L9 18z" fill="#2fa24f" />
            <circle cx="15" cy="15" r="6.5" fill="#fff" />
            <circle cx="15" cy="15" r="5.2" fill="#4285e8" />
          </svg>
        </TaskButton>
        <TaskButton label="Microsoft Excel" open bright className="ml-[3px]">
          <svg width="28" height="28" viewBox="0 0 28 28">
            <path d="M1 1h26v26H1z" fill="#f3f3e8" stroke="#3a7a35" strokeWidth="2" />
            <path d="M3.500 3.500h21v21h-21z" fill="#fbfbf6" stroke="#a8b79c" />
            <path d="M17 20.500h6M18 17.500h5M18 22.500h5" stroke="#9aa88d" />
            <path d="M5 6h6.500l3 4 3-4H23l-6 7.500 5 6.500h-6l-2.500-3.500L11 20H5l6-7z" fill="#3f9c42" stroke="#1d5e25" />
          </svg>
        </TaskButton>
      </div>
      <div className="relative flex items-center gap-2">
        <Svg><path d="M0 0h16v16H0z" fill="#e2001a" /><Umbrella /></Svg>
        <Svg>
          <path d="M.5.5h15v15H.5z" fill="#f3d6d6" stroke="#fff" />
          <path d="M3 3h3l2.300 7L10.500 3H13L9.500 13H7z" fill="#b8322c" />
        </Svg>
        <Svg>
          <path d="M2 1h1.500v14H2z" fill="#fff" />
          <path d="M4 2h5v2h5l-1 5H9V8H4z" fill="#fff" />
        </Svg>
        <Svg>
          <path d="M1 12h2v2H1zM4 10h2v4H4zM7 8h2v6H7zM10 5h2v9h-2zM13 2h2v12h-2z" fill="#fff" />
        </Svg>
        <Svg>
          <path d="M1 5h3l5-4v14l-5-4H1z" fill="#e2694a" stroke="#fbd2c4" strokeWidth=".8" />
          <path d="M11 5q2 3 0 6" fill="none" stroke="#9a3a2a" />
        </Svg>
        <Svg>
          <path d="M1 5h3l4-4v14l-4-4H1z" fill="#fff" />
          <path d="M10 5q2 3 0 6M12 3q3.500 5 0 10" fill="none" stroke="#fff" />
        </Svg>
        <div className={`flex w-20 flex-col items-center pr-1 text-[11px] leading-[17px] text-white ${UI}`}>
          <span>12:58 PM</span>
          <span>14/09/2017</span>
        </div>
      </div>
      <button type="button" aria-label="Show desktop" className="relative h-full w-[14px] border border-[#6f97bd] bg-linear-to-b from-[#5d7fa3] via-[#1c4069] to-[#2a5a8c]" />
    </div>
  )
}

export default function App() {
  return (
    <div className="flex h-screen flex-col overflow-hidden bg-[#f0f0f0]">
      <TitleBar />
      <div className="shrink-0 bg-linear-to-r from-[#9ebef5] to-[#c4dafa] to-70%">
        <MenuBar />
        <div className="flex flex-col gap-px">
          <StandardToolbar />
          <FormattingToolbar />
        </div>
        <FormulaBar />
      </div>
      <main className="flex min-h-0 flex-1 flex-col border-l-2 border-t-2 border-[#808080]">
        <div className="flex min-h-0 flex-1">
          <div className="min-w-0 flex-1 overflow-hidden"><Sheet /></div>
          <VerticalScroll />
        </div>
        <SheetTabs />
      </main>
      <StatusBar />
      <Taskbar />
    </div>
  )
}
